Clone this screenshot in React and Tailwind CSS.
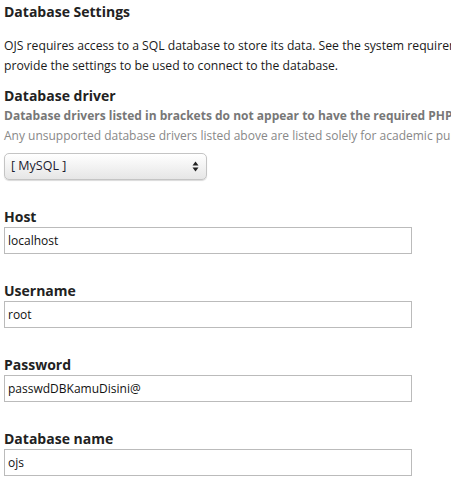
import React from "react";

function Field({ label, value }) {
  return (
    <div className="flex flex-col">
      <div className="text-[14px] font-bold leading-[20px] text-[#222] h-[20px]">{label}</div>
      <div className="w-[408px] h-[27px] border-[1.5px] border-[#bbbbbb] bg-white flex items-center pl-[3px] text-[12px] text-[#111]">
        {value}
      </div>
    </div>
  );
}

export default function App() {
  return (
    <div
      className="w-[451px] h-[493px] overflow-hidden bg-white pl-[4px] whitespace-nowrap"
      style={{ fontFamily: '"Open Sans", "Noto Sans", sans-serif' }}
    >
      <div className="pt-[2px] text-[14px] font-bold leading-[20px] text-[#222]">Database Settings</div>
      <div className="mt-[14px] text-[12.2px] leading-[20px] text-[#1a1a1a]">
        <div>OJS requires access to a SQL database to store its data. See the system requirements above for a list of supported databases.</div>
        <div>provide the settings to be used to connect to the database.</div>
      </div>
      <div className="mt-[10px] text-[14px] font-bold leading-[20px] text-[#222]">Database driver</div>
      <div className="text-[12px] font-bold leading-[20px] text-[#777]">
        Database drivers listed in brackets do not appear to have the required PHP extension loaded and will likely fail.
      </div>
      <div className="text-[12px] leading-[20px] text-[#888]">
        Any unsupported database drivers listed above are listed solely for academic purposes and are unlikely to work.
      </div>
      <div className="mt-[7px] w-[203px] h-[27px] rounded-[5px] border border-[#c4c4c4] bg-gradient-to-b from-white to-[#e6e6e6] shadow-[0_1px_1px_rgba(0,0,0,0.15)] flex items-center justify-between pl-[6px] pr-[7px] text-[12.5px] text-[#1a1a2e]">
        <span>[ MySQL ]</span>
        <svg width="7" height="11" viewBox="0 0 7 11">
          <path d="M3.5 0.5 L6.5 4.5 L0.5 4.5 Z" fill="#222" />
          <path d="M3.5 10.5 L6.5 6.5 L0.5 6.5 Z" fill="#222" />
        </svg>
      </div>
      <div className="mt-[27px] flex flex-col gap-[27px]">
        <Field label="Host" value="localhost" />
        <Field label="Username" value="root" />
        <Field label="Password" value="passwdDBKamuDisini@" />
        <Field label="Database name" value="ojs" />
      </div>
    </div>
  );
}
